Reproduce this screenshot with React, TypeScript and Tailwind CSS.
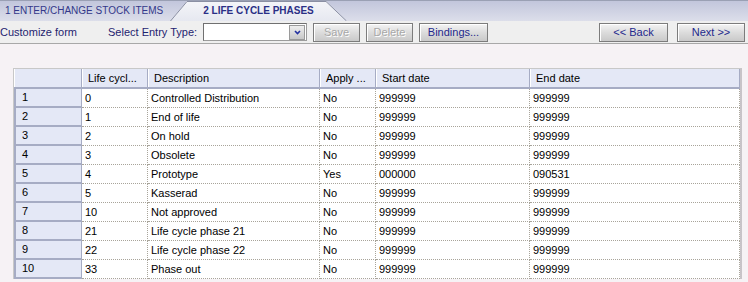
import React from 'react';

const rows = [
  ['0', 'Controlled Distribution', 'No', '999999', '999999'],
  ['1', 'End of life', 'No', '999999', '999999'],
  ['2', 'On hold', 'No', '999999', '999999'],
  ['3', 'Obsolete', 'No', '999999', '999999'],
  ['4', 'Prototype', 'Yes', '000000', '090531'],
  ['5', 'Kasserad', 'No', '999999', '999999'],
  ['10', 'Not approved', 'No', '999999', '999999'],
  ['21', 'Life cycle phase 21', 'No', '999999', '999999'],
  ['22', 'Life cycle phase 22', 'No', '999999', '999999'],
  ['33', 'Phase out', 'No', '999999', '999999'],
];

const cols = [
  { label: 'Life cycl...', w: 'w-[66px]' },
  { label: 'Description', w: 'w-[172px]' },
  { label: 'Apply ...', w: 'w-[56px]' },
  { label: 'Start date', w: 'w-[154px]' },
  { label: 'End date', w: 'w-[210px]' },
];

function Button({ label, disabled, w }: { label: string; disabled?: boolean; w: string }) {
  return (
    <div
      className={`${w} h-[19px] flex items-center justify-center border border-[#7c7c7c] bg-gradient-to-b from-[#f4f4f4] via-[#dcdcdc] to-[#c9c9c9] shadow-[inset_1px_1px_0_#ffffff] ${
        disabled ? 'text-[#a8a8a8] [text-shadow:1px_1px_0_#ffffff]' : 'text-[#23288c]'
      }`}
    >
      {label}
    </div>
  );
}

export default function App() {
  return (
    <div className="w-[748px] h-[282px] overflow-hidden bg-[#f6f2f5] text-[11px] text-black font-['Liberation_Sans',Arial,sans-serif] leading-none">
      {/* tab strip */}
      <div className="relative h-[21px] flex items-end border-t border-[#9aa0b4] bg-gradient-to-b from-[#c2c6dc] to-[#dcdeea]">
        <div className="w-[170px] h-[20px] flex items-center pl-[5px] text-[10px] text-[#33388a] whitespace-nowrap">
          1 ENTER/CHANGE STOCK ITEMS
        </div>
        <div className="relative w-[177px] h-[20px] flex items-center justify-center">
          <svg className="absolute inset-0" width="177" height="20" viewBox="0 0 177 20">
            <defs>
              <linearGradient id="tabg" x1="0" y1="0" x2="0" y2="1">
                <stop offset="0" stopColor="#f4f5f9" />
                <stop offset="1" stopColor="#e6e8f0" />
              </linearGradient>
            </defs>
            <polygon points="0,20 17,0 156,0 177,20" fill="url(#tabg)" />
            <polyline points="0.5,20 17,0.5 156,0.5 176.5,20" fill="none" stroke="#8a8fa3" strokeWidth="1" />
          </svg>
          <span className="relative text-[10px] font-bold text-[#2a2f86] whitespace-nowrap">2 LIFE CYCLE PHASES</span>
        </div>
      </div>

      {/* toolbar */}
      <div className="h-[23px] flex items-center border-b border-[#a8a8a8] bg-[#efefef]">
        <span className="w-[108px] text-[#1f2470]">Customize form</span>
        <span className="w-[95px] text-[#1f2470]">Select Entry Type:</span>
        <div className="w-[104px] h-[18px] flex items-center justify-end pr-[1px] bg-white border border-[#9c9c9c] border-t-[#707070] border-l-[#707070]">
          <div className="w-[16px] h-[15px] flex items-center justify-center bg-gradient-to-b from-[#eeeeee] to-[#c8c8c8] border border-[#9a9a9a]">
            <svg width="7" height="5" viewBox="0 0 7 5">
              <polyline points="1,1 3.5,3.5 6,1" fill="none" stroke="#2230a0" strokeWidth="1.6" />
            </svg>
          </div>
        </div>
        <div className="ml-[6px] flex gap-[6px]">
          <Button label="Save" disabled w="w-[47px]" />
          <Button label="Delete" disabled w="w-[47px]" />
          <Button label="Bindings..." w="w-[69px]" />
        </div>
        <div className="ml-auto mr-[3px] flex gap-[9px]">
          <Button label="<< Back" w="w-[69px]" />
          <Button label="Next >>" w="w-[68px]" />
        </div>
      </div>

      {/* grid */}
      <div className="pt-[24px] pl-[13px]">
        <div className="w-[729px] border-l border-t border-[#c8c8c8] border-r-[2px] border-r-[#c8c4c8] bg-white">
          <div className="flex h-[20px] bg-[#e4e8f6] border-b-[2px] border-[#a6acc4]">
            <div className="w-[68px] border-r border-[#a6acc4] border-l border-l-[#ffffff]" />
            {cols.map((c) => (
              <div
                key={c.label}
                className={`${c.w} flex items-center pl-[5px] border-l border-l-white border-r border-[#a6acc4]`}
              >
                {c.label}
              </div>
            ))}
          </div>
          {rows.map((r, i) => (
            <div key={i} className="flex h-[19px]">
              <div className="w-[68px] flex items-center pl-[6px] bg-[#e4e8f6] border-l-[2px] border-l-[#a6acc4] border-b-[2px] border-b-[#a6acc4] border-r border-r-[#a6acc4]">
                {i + 1}
              </div>
              {r.map((v, j) => (
                <div
                  key={j}
                  className={`${cols[j].w} flex items-center pl-[3px] border-r border-b border-dotted border-[#a8a49a]`}
                >
                  {v}
                </div>
              ))}
            </div>
          ))}
        </div>
      </div>
    </div>
  );
}
